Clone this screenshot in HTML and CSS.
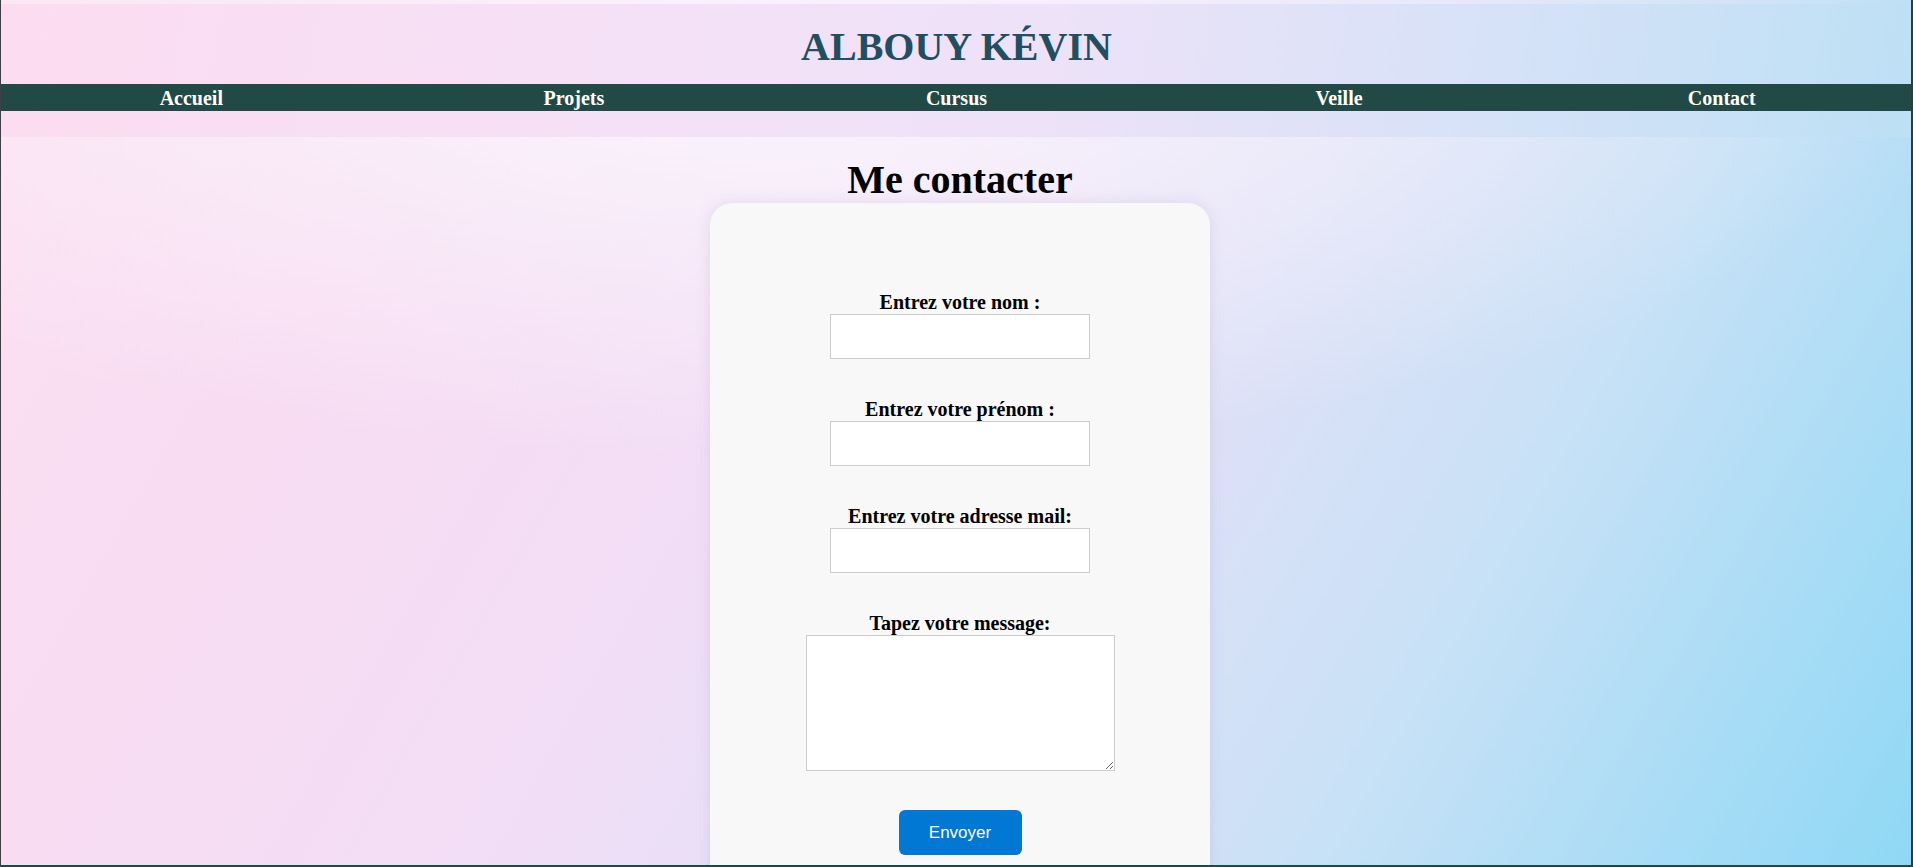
FILE: index.html
```html
<!DOCTYPE html>
<html lang="fr">
<head>
<meta charset="utf-8">
<title>Albouy Kévin - Contact</title>
<link rel="stylesheet" href="styles.css">
</head>
<body>
<div class="frame"></div>
<header class="site-header">
  <h1 class="site-title">ALBOUY KÉVIN</h1>
  <nav class="nav">
    <a href="#" class="nav-link">Accueil</a>
    <a href="#" class="nav-link">Projets</a>
    <a href="#" class="nav-link">Cursus</a>
    <a href="#" class="nav-link">Veille</a>
    <a href="#" class="nav-link">Contact</a>
  </nav>
</header>
<main class="main">
  <h2 class="page-title">Me contacter</h2>
  <form class="card">
    <div class="field">
      <label class="label" for="nom">Entrez votre nom :</label>
      <input class="input" id="nom" type="text">
    </div>
    <div class="field">
      <label class="label" for="prenom">Entrez votre prénom :</label>
      <input class="input" id="prenom" type="text">
    </div>
    <div class="field">
      <label class="label" for="mail">Entrez votre adresse mail:</label>
      <input class="input" id="mail" type="email">
    </div>
    <div class="field">
      <label class="label" for="msg">Tapez votre message:</label>
      <textarea class="textarea" id="msg"></textarea>
    </div>
    <button class="button" type="button">Envoyer</button>
  </form>
</main>
</body>
</html>
```
FILE: styles.css
```css
html, body {
  margin: 0;
  padding: 0;
}
body {
  font-family: "Liberation Serif", "Times New Roman", serif;
  min-height: 100vh;
  padding-top: 4px;
  box-sizing: border-box;
  background:
    radial-gradient(ellipse 60% 45% at 40% 8%, rgba(250, 248, 253, 0.9) 0%, rgba(250, 248, 253, 0) 100%),
    linear-gradient(120deg, #fbe0f1 0%, #f8dcf2 20%, #f1def6 42%, #e0e0f7 58%, #c8e1f6 75%, #8fd8f5 100%);
  background-attachment: fixed;
}
.frame {
  position: fixed;
  inset: 0;
  border-left: 1px solid #3f3f44;
  border-right: 2px solid #34373b;
  border-bottom: 2px solid #1d4a47;
  pointer-events: none;
  z-index: 10;
}
.site-header {
  background: linear-gradient(100deg, #fcdcf0 0%, #f4e1f7 35%, #ede2f8 55%, #d9e2f8 75%, #bde0f4 100%);
  padding: 20px 0 26px;
}
.site-title {
  margin: 0 0 14px;
  text-align: center;
  font-size: 40px;
  line-height: 46px;
  font-weight: bold;
  color: #214f5f;
}
.nav {
  display: grid;
  grid-template-columns: repeat(5, 1fr);
  background: #214a46;
  height: 27px;
}
.nav-link {
  text-align: center;
  color: #ffffff;
  text-decoration: none;
  font-weight: bold;
  font-size: 20px;
  line-height: 25px;
  padding-top: 2px;
}
.main {
  display: flex;
  flex-direction: column;
  align-items: center;
  padding: 20px 0 0 7px;
}
.page-title {
  margin: 0;
  font-size: 40px;
  line-height: 46px;
  font-weight: bold;
  color: #000;
}
.card {
  width: 500px;
  box-sizing: border-box;
  background: #f8f8f8;
  border-radius: 22px;
  box-shadow: 0 0 14px rgba(170, 150, 200, 0.25);
  padding: 88px 0 60px;
  display: flex;
  flex-direction: column;
  align-items: center;
}
.field {
  display: flex;
  flex-direction: column;
  align-items: center;
  margin-bottom: 39px;
}
.label {
  font-size: 20px;
  font-weight: bold;
  line-height: 23px;
  color: #000;
}
.input {
  width: 260px;
  height: 45px;
  box-sizing: border-box;
  border: 1px solid #cccccc;
  background: #fff;
  margin: 0;
  padding: 0 8px;
  border-radius: 0;
}
.textarea {
  display: block;
  width: 309px;
  height: 136px;
  box-sizing: border-box;
  border: 1px solid #cccccc;
  background: #fff;
  margin: 0;
  border-radius: 0;
}
.button {
  width: 123px;
  height: 45px;
  border: none;
  border-radius: 6px;
  background: #0078d4;
  color: #ffffff;
  font-family: "Liberation Sans", Arial, sans-serif;
  font-size: 17px;
  cursor: pointer;
}
```
